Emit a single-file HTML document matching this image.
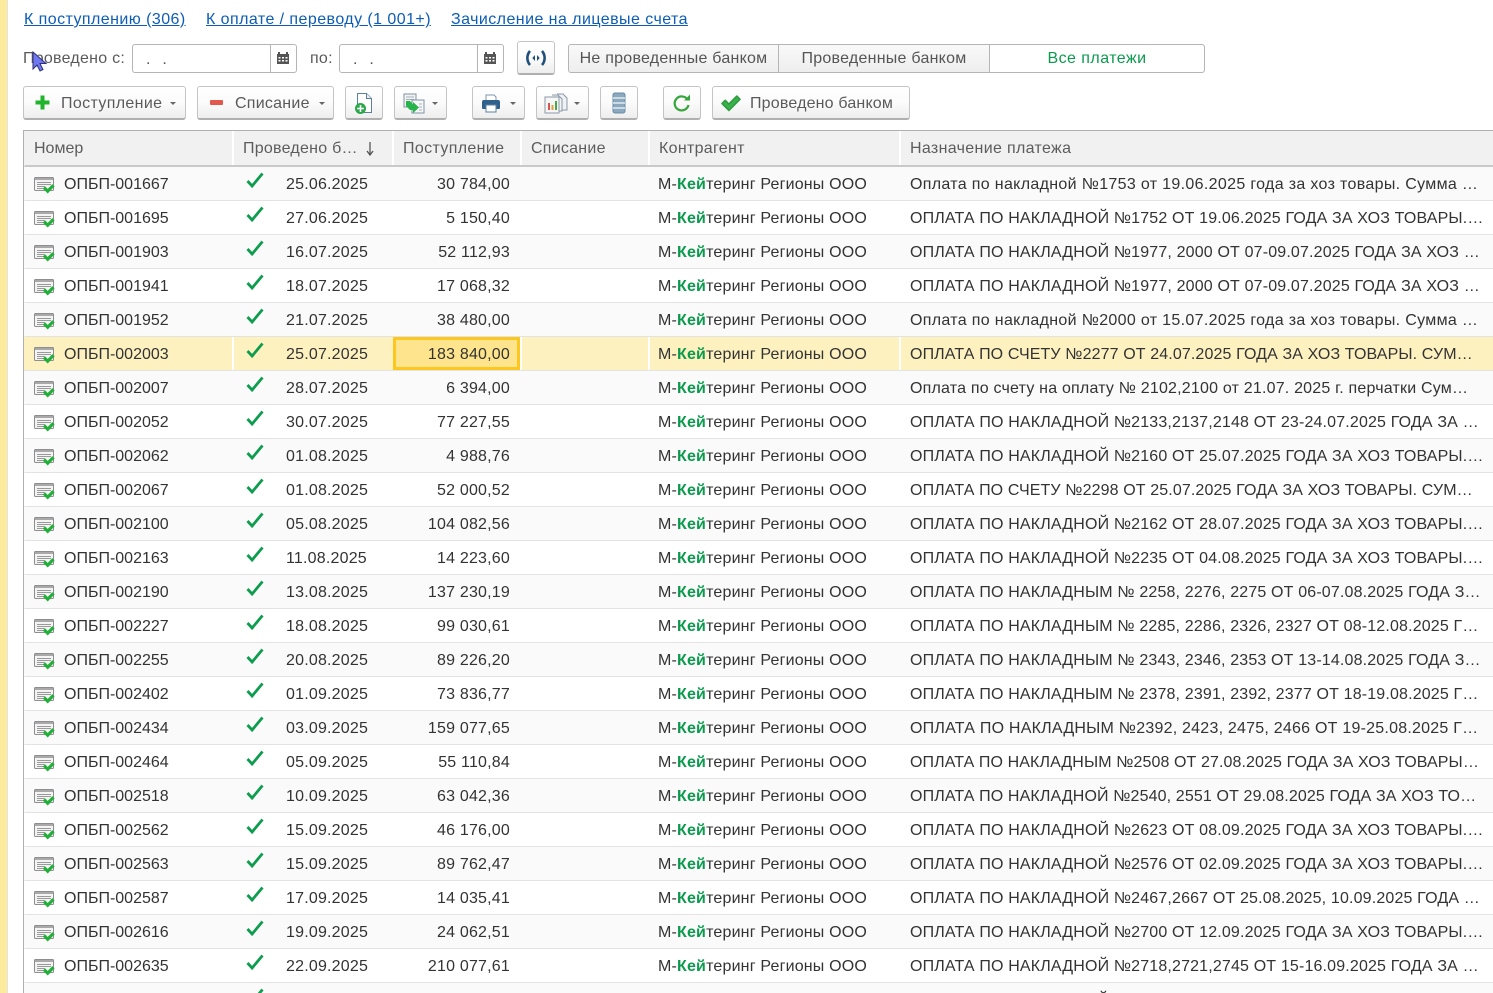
<!DOCTYPE html>
<html lang="ru"><head><meta charset="utf-8"><title>Платежи</title>
<style>
html,body{margin:0;padding:0;background:#fff}
#p{position:relative;width:1493px;height:993px;overflow:hidden;background:#fff;font:16px/20px "Liberation Sans",sans-serif;color:#333}
#p>*{position:absolute}
.strip{left:0;top:0;width:7px;height:993px;background:#fcea9d;border-right:1px solid #e3e3e3}
.lnk{top:10px;color:#0d5db5;text-decoration:underline;white-space:nowrap;letter-spacing:.44px}
.lbl{color:#5a5a5a;top:49px;white-space:nowrap;letter-spacing:.25px}
.fld{top:44px;height:27px;border:1px solid #b5b5b5;border-radius:3px;background:#fff}
.fld i{position:absolute;top:0;bottom:0;width:1px;background:#b5b5b5}
.fld b{position:absolute;top:5px;font-weight:400;color:#555;letter-spacing:1px}
.btn{top:86px;height:31px;border:1px solid #c4c4c4;border-bottom:2px solid #b0b0b0;border-radius:3px;background:linear-gradient(#fff,#fbfbfb 50%,#eeeeee);color:#5a5a5a;box-sizing:content-box}
.btn span{position:absolute;top:7px;white-space:nowrap}
.btn svg{position:absolute}
.car{position:absolute;width:0;height:0;border-left:3.5px solid transparent;border-right:3.5px solid transparent;border-top:3.5px solid #666;top:15px}
.tabs{left:568px;top:44px;width:635px;height:27px;border:1px solid #b5b5b5;border-radius:3px;background:linear-gradient(#f9f9f9,#eeeeee)}
.tabs div{position:absolute;top:0;height:27px;line-height:27px;text-align:center;color:#555;border-right:1px solid #b5b5b5;box-sizing:border-box;letter-spacing:.25px}
.tbl{left:23px;top:130px;width:1470px;height:863px;border-left:1px solid #b0b0b0;border-top:1px solid #b0b0b0;box-sizing:border-box;overflow:hidden}
.hd{position:absolute;left:0;top:0;width:1470px;height:34px;background:#f1f1f1;border-bottom:2px solid #c9c9c9;border-left:1px solid transparent}
.hd span{position:absolute;top:8px;color:#5c5c5c;white-space:nowrap;letter-spacing:.3px}
.hd i{position:absolute;top:0;width:2px;height:34px;background:#fff}
.r{position:absolute;left:0;margin-top:1px;width:1470px;height:33px;border-bottom:1px solid #e3e3e3;border-left:1px solid transparent;line-height:35px;color:#333;white-space:nowrap}
.r.o{background:#fafafa}
.r>span,.r>svg{position:absolute}
.r>svg.d{left:9px;top:9px}
.r>svg.c{left:221px;top:5px}
.n{left:39px}.dt{left:261px;letter-spacing:.2px}.a{right:985px;width:120px;text-align:right;letter-spacing:.2px}
.k{left:633px;letter-spacing:.18px}.k b{color:#0c9a4e}
.t{left:885px;letter-spacing:.16px}
.t.l1{letter-spacing:.33px}.t.l2{letter-spacing:.2px}.t.l3{letter-spacing:.23px}.t.l4{letter-spacing:.1px}
.sel{background:#fdf1c0}
.sel i{position:absolute;top:0;width:2px;height:33px;background:#fff}
.cellsel{position:absolute;left:368px;top:0;width:121px;height:27px;border:3px solid #fcc81f;background:#fee48d}
</style></head><body><div id="p">
<svg width="0" height="0" style="position:absolute">
<symbol id="doc" viewBox="0 0 21 18"><rect x="0.5" y="1.5" width="19" height="13" rx="1" fill="#f4f4f4" stroke="#8e8e8e"/><path d="M1 2h18v2H1z" fill="#a9a9a9"/><path d="M3 6.500h14M3 8.500h14M3 10.500h8M3 12.500h7" stroke="#9a9a9a" fill="none"/><path d="M10 11.500l3.700 3.700 5.800-6" stroke="#22b03a" stroke-width="3.200" fill="none"/></symbol>
<symbol id="chk" viewBox="0 0 18 16"><path d="M1.500 9l4.600 5L16.500 1.500" stroke="#0e9c4f" stroke-width="2.800" fill="none"/></symbol>
</svg>
<div class="strip"></div>
<a class="lnk" style="left:24px">К поступлению (306)</a>
<a class="lnk" style="left:206px">К оплате / переводу (1 001+)</a>
<a class="lnk" style="left:451px">Зачисление на лицевые счета</a>

<div class="lbl" style="left:23px">Проведено с:</div>
<div class="fld" style="left:132px;width:163px"><b style="left:13px">.&nbsp;&nbsp;.</b><i style="left:137px"></i><svg style="position:absolute;left:143px;top:6px" width="14" height="14" viewBox="0 0 14 14"><path d="M1 3h12v10H1z" fill="#555"/><path d="M3 1v3M11 1v3" stroke="#555" stroke-width="2"/><path d="M2.500 6h2v1.500h-2zM6 6h2v1.500H6zM9.500 6h2v1.500h-2zM2.500 9h2v1.500h-2zM6 9h2v1.500H6zM9.500 9h2v1.500h-2z" fill="#fff"/></svg></div>
<div class="lbl" style="left:310px">по:</div>
<div class="fld" style="left:339px;width:163px"><b style="left:13px">.&nbsp;&nbsp;.</b><i style="left:137px"></i><svg style="position:absolute;left:143px;top:6px" width="14" height="14" viewBox="0 0 14 14"><path d="M1 3h12v10H1z" fill="#555"/><path d="M3 1v3M11 1v3" stroke="#555" stroke-width="2"/><path d="M2.500 6h2v1.500h-2zM6 6h2v1.500H6zM9.500 6h2v1.500h-2zM2.500 9h2v1.500h-2zM6 9h2v1.500H6zM9.500 9h2v1.500h-2z" fill="#fff"/></svg></div>
<div class="btn" style="left:517px;top:41px;width:36px;height:31px"><svg style="left:8px;top:8px" width="20" height="16" viewBox="0 0 20 16"><path d="M4 1C0.500 5 0.500 11 4 15M16 1c3.500 4 3.500 10 0 14" stroke="#1f4f7a" stroke-width="2.600" fill="none"/><path d="M9 5L6.300 8 9 11zM11 5l2.700 3L11 11z" fill="#1f4f7a"/></svg></div>
<div class="tabs">
<div style="left:0;width:210px">Не проведенные банком</div>
<div style="left:210px;width:211px">Проведенные банком</div>
<div style="left:421px;width:214px;background:#fff;color:#0c9a4e;border-right:0;border-radius:0 3px 3px 0;letter-spacing:.45px">Все платежи</div>
</div>

<div class="btn" style="left:23px;width:161px"><svg style="left:11px;top:8px" width="15" height="15" viewBox="0 0 15 15"><path d="M5.500 0.500h4v5h5v4h-5v5h-4v-5h-5v-4h5z" fill="#20b32c"/></svg><span style="left:37px;letter-spacing:.36px">Поступление</span><i class="car" style="left:146px"></i></div>
<div class="btn" style="left:197px;width:135px"><svg style="left:12px;top:13px" width="14" height="5" viewBox="0 0 14 5"><rect width="13" height="5" rx="1" fill="#e2574c"/></svg><span style="left:37px;letter-spacing:.25px">Списание</span><i class="car" style="left:121px"></i></div>
<div class="btn" style="left:345px;width:36px"><svg style="left:8px;top:5px" width="20" height="23" viewBox="0 0 20 23"><path d="M3.500 1.500h9l5 5v14h-14z" fill="#fff" stroke="#5d7f9c"/><path d="M12.500 1.500v5h5" fill="#e8eef3" stroke="#5d7f9c"/><circle cx="6.500" cy="16.500" r="5.500" fill="#2aa84a"/><path d="M6.500 13v7M3 16.500h7" stroke="#fff" stroke-width="1.600"/></svg></div>
<div class="btn" style="left:394px;width:51px"><svg style="left:8px;top:6px" width="22" height="21" viewBox="0 0 22 21"><rect x="1" y="1" width="12" height="13" fill="#f3f3f3" stroke="#7f93a5"/><path d="M3 4h8M3 6.500h8" stroke="#a5b1bc"/><rect x="9" y="7" width="12" height="13" fill="#f7f7f7" stroke="#7f93a5"/><path d="M16 11h3M16 14h3M16 17h3" stroke="#a5b1bc"/><path d="M3 8h4l3 3.500V9l6 5.500-6 5.500v-3H7L3 13z" fill="#26b34a"/></svg><i class="car" style="left:37px"></i></div>
<div class="btn" style="left:472px;width:51px"><svg style="left:8px;top:7px" width="20" height="19" viewBox="0 0 20 19"><path d="M5 7V1h8l2 2v4" fill="#fff" stroke="#7d97ad"/><path d="M1 8q0-2 2-2h14q2 0 2 2v6q0 1-1 1H2q-1 0-1-1z" fill="#2f618c"/><rect x="5" y="11" width="10" height="7" fill="#fff" stroke="#5d7f9c"/></svg><i class="car" style="left:37px"></i></div>
<div class="btn" style="left:536px;width:51px"><svg style="left:7px;top:6px" width="24" height="21" viewBox="0 0 24 21"><path d="M13 1h6l4 4v12h-5" fill="#eef2f5" stroke="#8a98a5"/><path d="M8 2h6l4 4v12h-5" fill="#f2f4f6" stroke="#8a98a5"/><rect x="1" y="4" width="14" height="16" fill="#f6f6f6" stroke="#8a98a5"/><path d="M4 10h2v7H4z" fill="#d9534f"/><path d="M7.500 12h2v5h-2z" fill="#e2a03f"/><path d="M11 8h2v9h-2z" fill="#45a64a"/></svg><i class="car" style="left:37px"></i></div>
<div class="btn" style="left:600px;width:36px"><svg style="left:11px;top:5px" width="14" height="22" viewBox="0 0 14 22"><rect x="1" y="1" width="12" height="20" rx="2" fill="#8aa8c0" stroke="#6b8aa5"/><path d="M1 6h12M1 11h12M1 16h12" stroke="#e2eaf0" stroke-width="1.500"/></svg></div>
<div class="btn" style="left:663px;width:36px"><svg style="left:9px;top:7px" width="18" height="18" viewBox="0 0 18 18"><path d="M14.500 5.500A7 7 0 1 0 15.500 11" stroke="#35a73a" stroke-width="2.200" fill="none"/><path d="M11 6.500h6v-6z" fill="#35a73a"/></svg></div>
<div class="btn" style="left:712px;width:196px"><svg style="left:7px;top:7px" width="22" height="18" viewBox="0 0 20 17"><path d="M1.500 9l3-3 3.500 3.500L15.500 2l3 3L8 15.500z" fill="#38b24a" stroke="#2f9c40" stroke-width="1.500" stroke-linejoin="round"/></svg><span style="left:37px;letter-spacing:.18px">Проведено банком</span></div>

<div class="tbl">
<div class="hd">
<span style="left:9px;letter-spacing:0">Номер</span><i style="left:207px"></i>
<span style="left:218px;letter-spacing:.25px">Проведено б…</span><svg style="position:absolute;left:340px;top:11px" width="10" height="14" viewBox="0 0 10 14"><path d="M5 0v12M2 9l3 4 3-4" stroke="#555" stroke-width="1.300" fill="none"/></svg><i style="left:367px"></i>
<span style="left:378px;letter-spacing:.36px">Поступление</span><i style="left:495px"></i>
<span style="left:506px;letter-spacing:.25px">Списание</span><i style="left:623px"></i>
<span style="left:634px">Контрагент</span><i style="left:874px"></i>
<span style="left:885px;letter-spacing:.33px">Назначение платежа</span>
</div>
<div class="r o" style="top:35px"><svg class="d" width="21" height="18"><use href="#doc"/></svg><span class="n">ОПБП-001667</span><svg class="c" width="18" height="16"><use href="#chk"/></svg><span class="dt">25.06.2025</span><span class="a">30 784,00</span><span class="k">М-<b>Кей</b>теринг Регионы ООО</span><span class="t l1">Оплата по накладной №1753 от 19.06.2025 года за хоз товары. Сумма …</span></div>
<div class="r" style="top:69px"><svg class="d" width="21" height="18"><use href="#doc"/></svg><span class="n">ОПБП-001695</span><svg class="c" width="18" height="16"><use href="#chk"/></svg><span class="dt">27.06.2025</span><span class="a">5 150,40</span><span class="k">М-<b>Кей</b>теринг Регионы ООО</span><span class="t">ОПЛАТА ПО НАКЛАДНОЙ №1752 ОТ 19.06.2025 ГОДА ЗА ХОЗ ТОВАРЫ.…</span></div>
<div class="r o" style="top:103px"><svg class="d" width="21" height="18"><use href="#doc"/></svg><span class="n">ОПБП-001903</span><svg class="c" width="18" height="16"><use href="#chk"/></svg><span class="dt">16.07.2025</span><span class="a">52 112,93</span><span class="k">М-<b>Кей</b>теринг Регионы ООО</span><span class="t">ОПЛАТА ПО НАКЛАДНОЙ №1977, 2000 ОТ 07-09.07.2025 ГОДА ЗА ХОЗ …</span></div>
<div class="r" style="top:137px"><svg class="d" width="21" height="18"><use href="#doc"/></svg><span class="n">ОПБП-001941</span><svg class="c" width="18" height="16"><use href="#chk"/></svg><span class="dt">18.07.2025</span><span class="a">17 068,32</span><span class="k">М-<b>Кей</b>теринг Регионы ООО</span><span class="t">ОПЛАТА ПО НАКЛАДНОЙ №1977, 2000 ОТ 07-09.07.2025 ГОДА ЗА ХОЗ …</span></div>
<div class="r o" style="top:171px"><svg class="d" width="21" height="18"><use href="#doc"/></svg><span class="n">ОПБП-001952</span><svg class="c" width="18" height="16"><use href="#chk"/></svg><span class="dt">21.07.2025</span><span class="a">38 480,00</span><span class="k">М-<b>Кей</b>теринг Регионы ООО</span><span class="t l1">Оплата по накладной №2000 от 15.07.2025 года за хоз товары. Сумма …</span></div>
<div class="r sel" style="top:205px"><i style="left:207px"></i><i style="left:495px"></i><i style="left:623px"></i><i style="left:874px"></i><div class="cellsel"></div><svg class="d" width="21" height="18"><use href="#doc"/></svg><span class="n">ОПБП-002003</span><svg class="c" width="18" height="16"><use href="#chk"/></svg><span class="dt">25.07.2025</span><span class="a">183 840,00</span><span class="k">М-<b>Кей</b>теринг Регионы ООО</span><span class="t" style="letter-spacing:.12px">ОПЛАТА ПО СЧЕТУ №2277 ОТ 24.07.2025 ГОДА ЗА ХОЗ ТОВАРЫ. СУМ…</span></div>
<div class="r o" style="top:239px"><svg class="d" width="21" height="18"><use href="#doc"/></svg><span class="n">ОПБП-002007</span><svg class="c" width="18" height="16"><use href="#chk"/></svg><span class="dt">28.07.2025</span><span class="a">6 394,00</span><span class="k">М-<b>Кей</b>теринг Регионы ООО</span><span class="t l2">Оплата по счету на оплату № 2102,2100 от 21.07. 2025 г. перчатки Сум…</span></div>
<div class="r" style="top:273px"><svg class="d" width="21" height="18"><use href="#doc"/></svg><span class="n">ОПБП-002052</span><svg class="c" width="18" height="16"><use href="#chk"/></svg><span class="dt">30.07.2025</span><span class="a">77 227,55</span><span class="k">М-<b>Кей</b>теринг Регионы ООО</span><span class="t">ОПЛАТА ПО НАКЛАДНОЙ №2133,2137,2148 ОТ 23-24.07.2025 ГОДА ЗА …</span></div>
<div class="r o" style="top:307px"><svg class="d" width="21" height="18"><use href="#doc"/></svg><span class="n">ОПБП-002062</span><svg class="c" width="18" height="16"><use href="#chk"/></svg><span class="dt">01.08.2025</span><span class="a">4 988,76</span><span class="k">М-<b>Кей</b>теринг Регионы ООО</span><span class="t">ОПЛАТА ПО НАКЛАДНОЙ №2160 ОТ 25.07.2025 ГОДА ЗА ХОЗ ТОВАРЫ.…</span></div>
<div class="r" style="top:341px"><svg class="d" width="21" height="18"><use href="#doc"/></svg><span class="n">ОПБП-002067</span><svg class="c" width="18" height="16"><use href="#chk"/></svg><span class="dt">01.08.2025</span><span class="a">52 000,52</span><span class="k">М-<b>Кей</b>теринг Регионы ООО</span><span class="t" style="letter-spacing:.12px">ОПЛАТА ПО СЧЕТУ №2298 ОТ 25.07.2025 ГОДА ЗА ХОЗ ТОВАРЫ. СУМ…</span></div>
<div class="r o" style="top:375px"><svg class="d" width="21" height="18"><use href="#doc"/></svg><span class="n">ОПБП-002100</span><svg class="c" width="18" height="16"><use href="#chk"/></svg><span class="dt">05.08.2025</span><span class="a">104 082,56</span><span class="k">М-<b>Кей</b>теринг Регионы ООО</span><span class="t">ОПЛАТА ПО НАКЛАДНОЙ №2162 ОТ 28.07.2025 ГОДА ЗА ХОЗ ТОВАРЫ.…</span></div>
<div class="r" style="top:409px"><svg class="d" width="21" height="18"><use href="#doc"/></svg><span class="n">ОПБП-002163</span><svg class="c" width="18" height="16"><use href="#chk"/></svg><span class="dt">11.08.2025</span><span class="a">14 223,60</span><span class="k">М-<b>Кей</b>теринг Регионы ООО</span><span class="t">ОПЛАТА ПО НАКЛАДНОЙ №2235 ОТ 04.08.2025 ГОДА ЗА ХОЗ ТОВАРЫ.…</span></div>
<div class="r o" style="top:443px"><svg class="d" width="21" height="18"><use href="#doc"/></svg><span class="n">ОПБП-002190</span><svg class="c" width="18" height="16"><use href="#chk"/></svg><span class="dt">13.08.2025</span><span class="a">137 230,19</span><span class="k">М-<b>Кей</b>теринг Регионы ООО</span><span class="t">ОПЛАТА ПО НАКЛАДНЫМ № 2258, 2276, 2275 ОТ 06-07.08.2025 ГОДА З…</span></div>
<div class="r" style="top:477px"><svg class="d" width="21" height="18"><use href="#doc"/></svg><span class="n">ОПБП-002227</span><svg class="c" width="18" height="16"><use href="#chk"/></svg><span class="dt">18.08.2025</span><span class="a">99 030,61</span><span class="k">М-<b>Кей</b>теринг Регионы ООО</span><span class="t">ОПЛАТА ПО НАКЛАДНЫМ № 2285, 2286, 2326, 2327 ОТ 08-12.08.2025 Г…</span></div>
<div class="r o" style="top:511px"><svg class="d" width="21" height="18"><use href="#doc"/></svg><span class="n">ОПБП-002255</span><svg class="c" width="18" height="16"><use href="#chk"/></svg><span class="dt">20.08.2025</span><span class="a">89 226,20</span><span class="k">М-<b>Кей</b>теринг Регионы ООО</span><span class="t">ОПЛАТА ПО НАКЛАДНЫМ № 2343, 2346, 2353 ОТ 13-14.08.2025 ГОДА З…</span></div>
<div class="r" style="top:545px"><svg class="d" width="21" height="18"><use href="#doc"/></svg><span class="n">ОПБП-002402</span><svg class="c" width="18" height="16"><use href="#chk"/></svg><span class="dt">01.09.2025</span><span class="a">73 836,77</span><span class="k">М-<b>Кей</b>теринг Регионы ООО</span><span class="t">ОПЛАТА ПО НАКЛАДНЫМ № 2378, 2391, 2392, 2377 ОТ 18-19.08.2025 Г…</span></div>
<div class="r o" style="top:579px"><svg class="d" width="21" height="18"><use href="#doc"/></svg><span class="n">ОПБП-002434</span><svg class="c" width="18" height="16"><use href="#chk"/></svg><span class="dt">03.09.2025</span><span class="a">159 077,65</span><span class="k">М-<b>Кей</b>теринг Регионы ООО</span><span class="t l3">ОПЛАТА ПО НАКЛАДНЫМ №2392, 2423, 2475, 2466 ОТ 19-25.08.2025 Г…</span></div>
<div class="r" style="top:613px"><svg class="d" width="21" height="18"><use href="#doc"/></svg><span class="n">ОПБП-002464</span><svg class="c" width="18" height="16"><use href="#chk"/></svg><span class="dt">05.09.2025</span><span class="a">55 110,84</span><span class="k">М-<b>Кей</b>теринг Регионы ООО</span><span class="t l4">ОПЛАТА ПО НАКЛАДНЫМ №2508 ОТ 27.08.2025 ГОДА ЗА ХОЗ ТОВАРЫ…</span></div>
<div class="r o" style="top:647px"><svg class="d" width="21" height="18"><use href="#doc"/></svg><span class="n">ОПБП-002518</span><svg class="c" width="18" height="16"><use href="#chk"/></svg><span class="dt">10.09.2025</span><span class="a">63 042,36</span><span class="k">М-<b>Кей</b>теринг Регионы ООО</span><span class="t" style="letter-spacing:.13px">ОПЛАТА ПО НАКЛАДНОЙ №2540, 2551 ОТ 29.08.2025 ГОДА ЗА ХОЗ ТО…</span></div>
<div class="r" style="top:681px"><svg class="d" width="21" height="18"><use href="#doc"/></svg><span class="n">ОПБП-002562</span><svg class="c" width="18" height="16"><use href="#chk"/></svg><span class="dt">15.09.2025</span><span class="a">46 176,00</span><span class="k">М-<b>Кей</b>теринг Регионы ООО</span><span class="t">ОПЛАТА ПО НАКЛАДНОЙ №2623 ОТ 08.09.2025 ГОДА ЗА ХОЗ ТОВАРЫ.…</span></div>
<div class="r o" style="top:715px"><svg class="d" width="21" height="18"><use href="#doc"/></svg><span class="n">ОПБП-002563</span><svg class="c" width="18" height="16"><use href="#chk"/></svg><span class="dt">15.09.2025</span><span class="a">89 762,47</span><span class="k">М-<b>Кей</b>теринг Регионы ООО</span><span class="t">ОПЛАТА ПО НАКЛАДНОЙ №2576 ОТ 02.09.2025 ГОДА ЗА ХОЗ ТОВАРЫ.…</span></div>
<div class="r" style="top:749px"><svg class="d" width="21" height="18"><use href="#doc"/></svg><span class="n">ОПБП-002587</span><svg class="c" width="18" height="16"><use href="#chk"/></svg><span class="dt">17.09.2025</span><span class="a">14 035,41</span><span class="k">М-<b>Кей</b>теринг Регионы ООО</span><span class="t">ОПЛАТА ПО НАКЛАДНОЙ №2467,2667 ОТ 25.08.2025, 10.09.2025 ГОДА …</span></div>
<div class="r o" style="top:783px"><svg class="d" width="21" height="18"><use href="#doc"/></svg><span class="n">ОПБП-002616</span><svg class="c" width="18" height="16"><use href="#chk"/></svg><span class="dt">19.09.2025</span><span class="a">24 062,51</span><span class="k">М-<b>Кей</b>теринг Регионы ООО</span><span class="t">ОПЛАТА ПО НАКЛАДНОЙ №2700 ОТ 12.09.2025 ГОДА ЗА ХОЗ ТОВАРЫ.…</span></div>
<div class="r" style="top:817px"><svg class="d" width="21" height="18"><use href="#doc"/></svg><span class="n">ОПБП-002635</span><svg class="c" width="18" height="16"><use href="#chk"/></svg><span class="dt">22.09.2025</span><span class="a">210 077,61</span><span class="k">М-<b>Кей</b>теринг Регионы ООО</span><span class="t">ОПЛАТА ПО НАКЛАДНОЙ №2718,2721,2745 ОТ 15-16.09.2025 ГОДА ЗА …</span></div>
<div class="r o" style="top:851px"><svg class="c" width="18" height="16"><use href="#chk"/></svg><span class="t">ОПЛАТА ПО НАКЛАДНОЙ</span></div>
</div>
<svg style="left:31px;top:51px" width="17" height="22" viewBox="0 0 17 22"><path d="M2 1v17l4-4 3 6 3-1.500-3-6h6z" fill="#6f78f0" stroke="#30307a" stroke-width="1"/></svg>
</div></body></html>
